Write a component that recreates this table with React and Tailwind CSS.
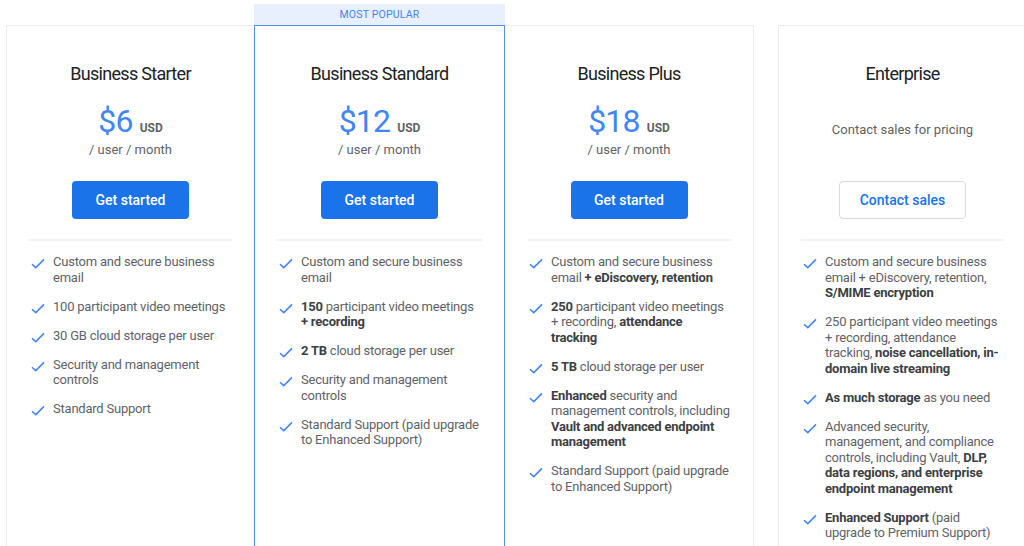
const font = { fontFamily: 'Roboto, "Liberation Sans", Arial, sans-serif' };

const Check = () => (
  <svg className="w-[14px] h-[11px] mt-[4px] shrink-0 text-[#4285f4]" viewBox="0 0 14 11" fill="none">
    <path d="M1 6.2 L4.8 9.6 L13 1.4" stroke="currentColor" strokeWidth="1.5" />
  </svg>
);

const B = ({ children }) => <span className="font-bold text-[#3c4043]">{children}</span>;

const plans = [
  {
    name: 'Business Starter',
    price: '$6',
    wrap: 'border-l border-t border-b border-[#ececec] w-[248px]',
    features: [
      <>Custom and secure business email</>,
      <>100 participant video meetings</>,
      <>30 GB cloud storage per user</>,
      <>Security and management controls</>,
      <>Standard Support</>,
    ],
  },
  {
    name: 'Business Standard',
    price: '$12',
    popular: true,
    wrap: 'border border-[#5b8def] w-[251px]',
    features: [
      <>Custom and secure business email</>,
      <><B>150</B> participant video meetings <B>+ recording</B></>,
      <><B>2 TB</B> cloud storage per user</>,
      <>Security and management controls</>,
      <>Standard Support (paid upgrade to Enhanced Support)</>,
    ],
  },
  {
    name: 'Business Plus',
    price: '$18',
    wrap: 'border-r border-t border-b border-[#ececec] w-[249px]',
    features: [
      <>Custom and secure business email <B>+ eDiscovery, retention</B></>,
      <><B>250</B> participant video meetings + recording, <B>attendance tracking</B></>,
      <><B>5 TB</B> cloud storage per user</>,
      <><B>Enhanced</B> security and management controls, including <B>Vault and advanced endpoint management</B></>,
      <>Standard Support (paid upgrade to Enhanced Support)</>,
    ],
  },
  {
    name: 'Enterprise',
    enterprise: true,
    wrap: 'border border-[#ececec] w-[249px] ml-[24px]',
    features: [
      <>Custom and secure business email + eDiscovery, retention, <B>S/MIME encryption</B></>,
      <>250 participant video meetings + recording, attendance tracking, <B>noise cancellation, in-domain live streaming</B></>,
      <><B>As much storage</B> as you need</>,
      <>Advanced security, management, and compliance controls, including Vault, <B>DLP, data regions, and enterprise endpoint management</B></>,
      <><B>Enhanced Support</B> (paid upgrade to Premium Support)</>,
    ],
  },
];

const Card = ({ plan }) => (
  <div className="flex flex-col shrink-0">
    <div className={`h-[21px] flex items-center justify-center text-[10.5px] tracking-[0.2px] ${plan.popular ? 'bg-[#e8f0fe] text-[#4285f4]' : ''}`}>
      {plan.popular ? 'MOST POPULAR' : ''}
    </div>
    <div className={`${plan.wrap} h-[600px] bg-white px-[22px] pt-[35px]`}>
      <h2 className="text-center text-[18px] leading-[26px] text-[#202124] tracking-[-0.7px]">{plan.name}</h2>
      {plan.enterprise ? (
        <div className="h-[75px] pt-[35px] text-center text-[13px] leading-[16px] text-[#5f6368]">Contact sales for pricing</div>
      ) : (
        <div className="h-[75px] pt-[21px] flex flex-col items-center">
          <div className="flex items-baseline gap-[7px] leading-[27px]">
            <span className="text-[32px] text-[#4285f4] tracking-[-0.8px]">{plan.price}</span>
            <span className="text-[12px] font-bold text-[#5f6368]">USD</span>
          </div>
          <div className="text-[13px] leading-[16px] text-[#5f6368]">/ user / month</div>
        </div>
      )}
      <div className="flex justify-center mt-[19px]">
        {plan.enterprise ? (
          <button className="w-[127px] h-[38px] rounded-[4px] border border-[#dadce0] bg-white text-[14px] font-medium text-[#1a73e8]">
            Contact sales
          </button>
        ) : (
          <button className="w-[117px] h-[38px] rounded-[4px] bg-[#1a73e8] text-[14px] font-medium text-white">
            Get started
          </button>
        )}
      </div>
      <div className="h-[2px] bg-[#f1f3f4] mt-[20px]" />
      <ul className="flex flex-col gap-[13.5px] pt-[13px] pl-[2px]">
        {plan.features.map((f, i) => (
          <li key={i} className="flex items-start gap-[8px]">
            <Check />
            <span className="text-[13px] leading-[15.5px] tracking-[-0.22px] text-[#5f6368]">{f}</span>
          </li>
        ))}
      </ul>
    </div>
  </div>
);

export default function App() {
  return (
    <div style={font} className="w-[1024px] h-[546px] overflow-hidden bg-white">
      <div className="flex pl-[6px] pt-[4px]">
        {plans.map((p) => (
          <Card key={p.name} plan={p} />
        ))}
      </div>
    </div>
  );
}
